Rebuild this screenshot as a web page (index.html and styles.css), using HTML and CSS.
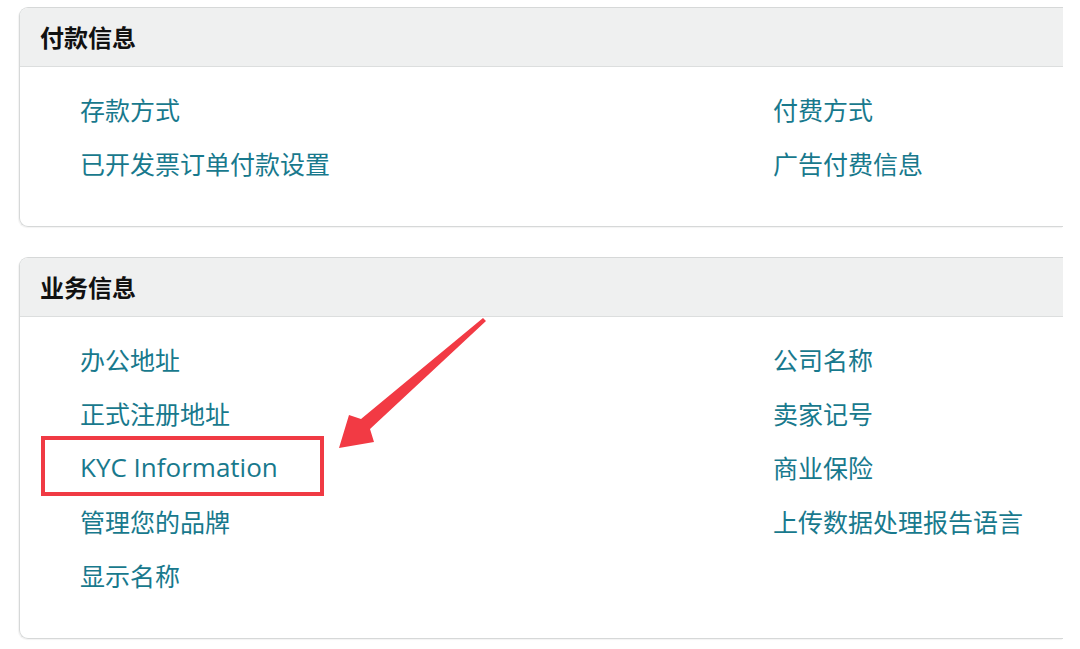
FILE: index.html
```html
<!DOCTYPE html>
<html lang="zh-CN">
<head>
<meta charset="utf-8">
<title>设置</title>
<link rel="stylesheet" href="styles.css">
</head>
<body>
<div class="page">
  <section class="card">
    <div class="card-head">付款信息</div>
    <div class="card-body">
      <ul class="col">
        <li><a class="link">存款方式</a></li>
        <li><a class="link">已开发票订单付款设置</a></li>
      </ul>
      <ul class="col">
        <li><a class="link">付费方式</a></li>
        <li><a class="link">广告付费信息</a></li>
      </ul>
    </div>
  </section>
  <section class="card">
    <div class="card-head">业务信息</div>
    <div class="card-body">
      <ul class="col">
        <li><a class="link">办公地址</a></li>
        <li><a class="link">正式注册地址</a></li>
        <li class="marked"><a class="link latin">KYC Information</a><span class="mark-box"></span></li>
        <li><a class="link">管理您的品牌</a></li>
        <li><a class="link">显示名称</a></li>
      </ul>
      <ul class="col">
        <li><a class="link">公司名称</a></li>
        <li><a class="link">卖家记号</a></li>
        <li><a class="link">商业保险</a></li>
        <li><a class="link">上传数据处理报告语言</a></li>
      </ul>
    </div>
  </section>
  <svg class="arrow" width="1080" height="649" viewBox="0 0 1080 649">
    <polygon points="483,318 486,321 370,429 374,442 339,448 349,415 361,419" fill="#f23a44"/>
  </svg>
</div>
</body>
</html>
```
FILE: styles.css
```css
html, body {
  margin: 0;
  padding: 0;
  background: #ffffff;
}
body {
  font-family: "Noto Sans CJK SC", "Noto Sans", sans-serif;
}
.page {
  position: relative;
  width: 1080px;
  height: 649px;
  padding: 7px 17px 0 19px;
  box-sizing: border-box;
  overflow: hidden;
}
.card {
  border: 1px solid #d6d8d8;
  border-right: none;
  border-radius: 9px 0 0 9px;
  box-shadow: -1px 1px 1px rgba(0,0,0,0.05);
  overflow: hidden;
  margin-bottom: 30px;
}
.card-head {
  height: 59px;
  background: #eff0f0;
  border-bottom: 1px solid #dcdede;
  padding: 0 0 2px 20px;
  box-sizing: border-box;
  display: flex;
  align-items: center;
  font-size: 24px;
  font-weight: 700;
  color: #111111;
}
.card-body {
  display: grid;
  grid-template-columns: 693px 1fr;
  padding: 16px 0 35px 60px;
}
.col {
  list-style: none;
  margin: 0;
  padding: 0;
}
.col li {
  height: 54px;
  line-height: 53px;
  white-space: nowrap;
}
.link {
  font-size: 25px;
  color: #18798d;
  text-decoration: none;
}
.latin {
  font-family: "Open Sans", "Noto Sans", sans-serif;
  font-size: 26px;
}
.marked {
  position: relative;
}
.mark-box {
  position: absolute;
  left: -39px;
  top: -5px;
  width: 283px;
  height: 60px;
  box-sizing: border-box;
  border: 4px solid #f03a44;
}
.arrow {
  position: absolute;
  left: 0;
  top: 0;
  pointer-events: none;
}
```
